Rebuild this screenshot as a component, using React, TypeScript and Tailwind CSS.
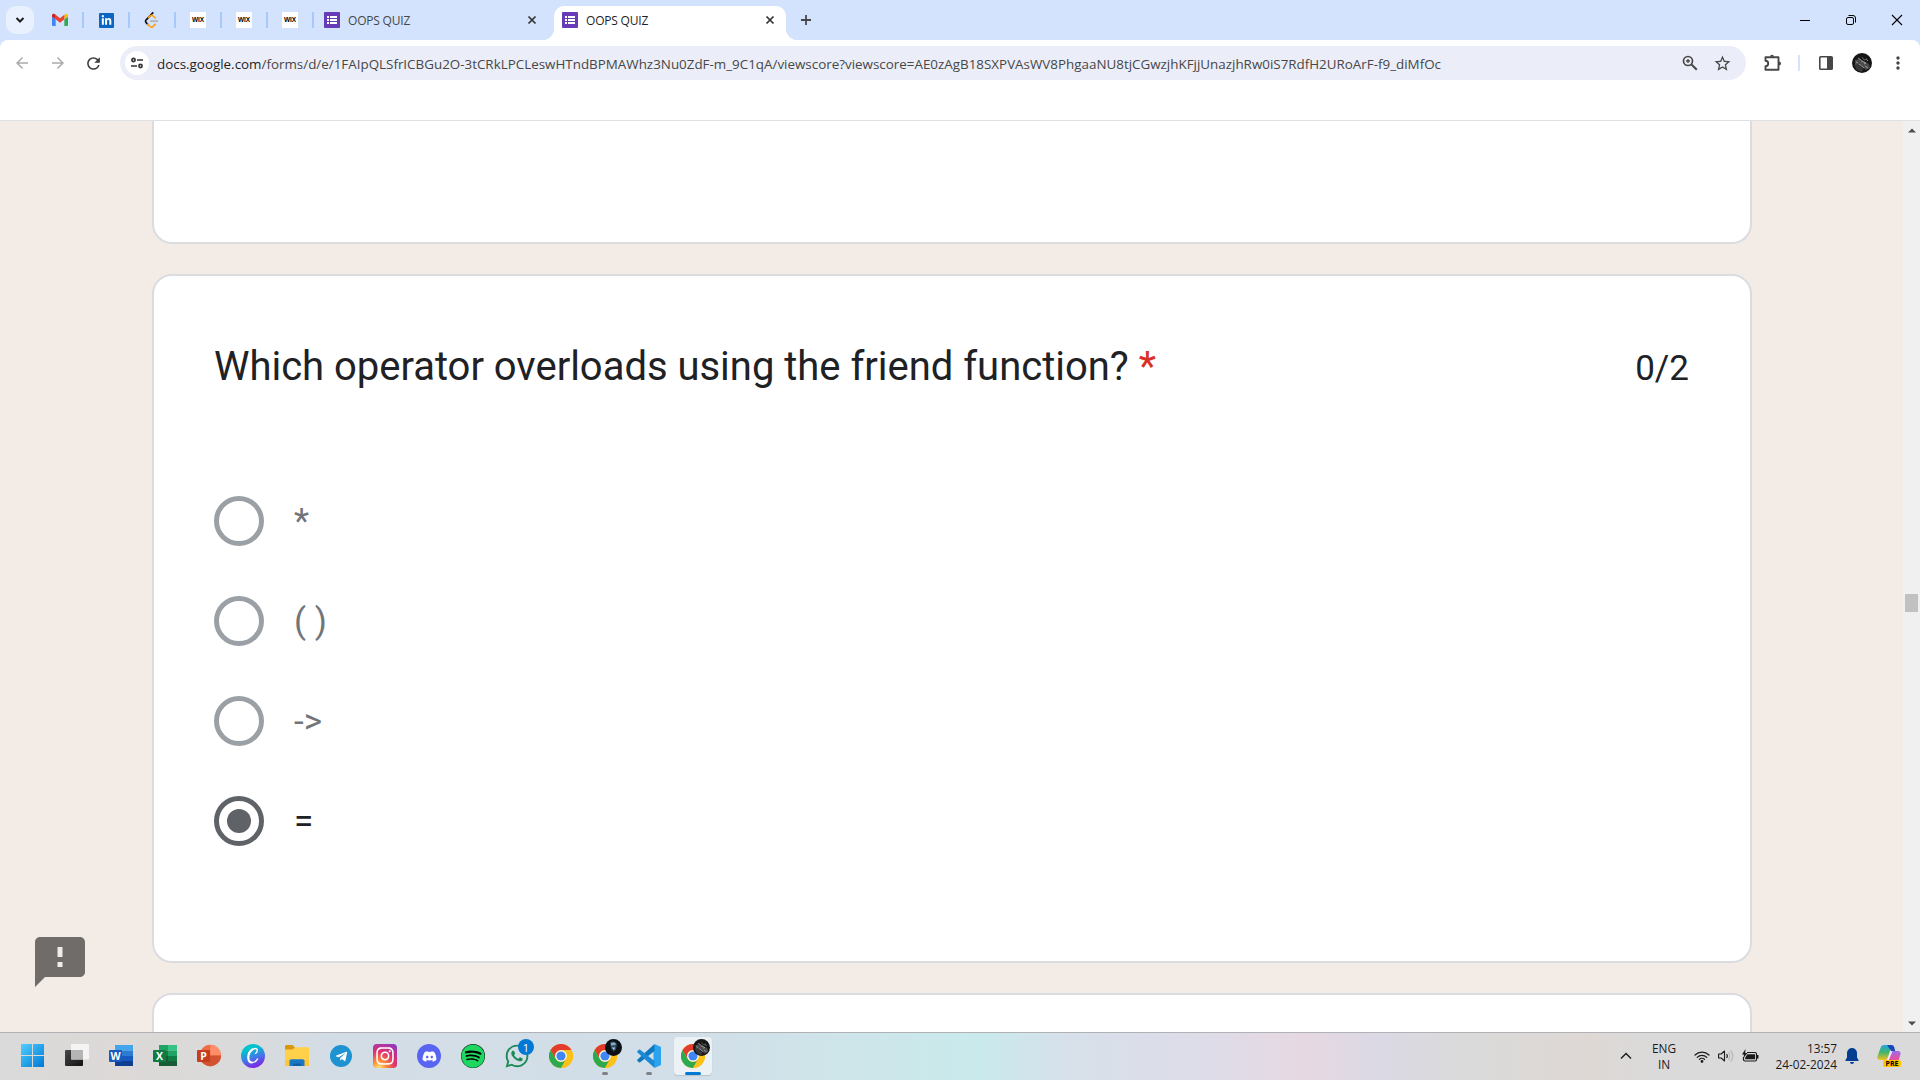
import React from "react";
import {
  FaDiscord,
  FaInstagram,
  FaLinkedinIn,
  FaSpotify,
  FaTelegramPlane,
  FaWhatsapp,
} from "react-icons/fa";
import {
  MdArrowBack,
  MdArrowForward,
  MdFeedback,
  MdMoreVert,
  MdRefresh,
  MdStarBorder,
} from "react-icons/md";

/* ---------- Tab strip ---------- */

function GmailIcon() {
  return (
    <svg width="16" height="16" viewBox="0 0 24 24">
      <path d="M1.500 21h4V11L0 7v12.500A1.500 1.500 0 0 0 1.500 21z" fill="#4285f4" />
      <path d="M18.500 21h4A1.500 1.500 0 0 0 24 19.500V7l-5.500 4z" fill="#34a853" />
      <path d="M18.500 4.500V11L24 7V5.200c0-2.200-2.500-3.400-4.200-2z" fill="#fbbc04" />
      <path d="M5.500 11V4.300L12 9.200l6.500-4.900V11L12 16z" fill="#ea4335" />
      <path d="M0 5.200V7l5.500 4V4.300L4.200 3.200C2.500 1.900 0 3 0 5.200z" fill="#c5221f" />
    </svg>
  );
}

function LeetIcon() {
  return (
    <svg width="16" height="16" viewBox="0 0 16 16" fill="none" strokeLinecap="round" strokeWidth="1.700">
      <path d="M8.800.9 2.200 7.800c-.8.900-.8 2 0 2.900l1.500 1.600" stroke="#111" />
      <path d="M3.700 12.300 5.900 14.400c1 .9 2.400.9 3.300 0l2-2M4.600 5.300l1.600-1.400c1-.8 2.200-.7 3 .1l2 1.900" stroke="#ffa116" />
      <path d="M6.800 9.200h6.500" stroke="#b3b3b3" />
    </svg>
  );
}

function WixIcon() {
  return (
    <span className="flex h-4 w-4 items-center justify-center bg-white font-['Liberation_Sans',sans-serif] text-[6.500px] leading-none font-bold tracking-[-0.100px] text-black">
      WIX
    </span>
  );
}

function FormsIcon() {
  return (
    <svg width="16" height="16" viewBox="0 0 16 16" className="shrink-0">
      <rect width="16" height="16" rx="1" fill="#673ab7" />
      <path d="M3 4h2v2H3zM3 7h2v2H3zM3 10h2v2H3zM6 4h7v2H6zM6 7h7v2H6zM6 10h7v2H6z" fill="#fff" />
    </svg>
  );
}

function TabStrip() {
  const pinned = [
    <GmailIcon />,
    <span className="flex h-[15px] w-[15px] items-center justify-center rounded-[1px] bg-[#0a66c2]">
      <FaLinkedinIn size={11} color="#fff" />
    </span>,
    <LeetIcon />,
    <WixIcon />,
    <WixIcon />,
    <WixIcon />,
  ];
  return (
    <div className="flex h-10 shrink-0 items-center bg-[#d3e3fd] pl-1.5 font-['Open_Sans',sans-serif] text-[12px] tracking-[-0.200px]">
      <div className="mr-1 flex h-7 w-7 items-center justify-center rounded-[10px] bg-[#eaf1fe]">
        <svg width="10" height="8" viewBox="0 0 10 8" fill="none" stroke="#1f1f1f" strokeWidth="2">
          <path d="M1.500 2 5 5.500 8.500 2" />
        </svg>
      </div>
      {pinned.map((icon, i) => (
        <div key={i} className="flex h-4 w-[46px] items-center justify-center border-r-2 border-[#a8c7fa]">
          {icon}
        </div>
      ))}
      <div className="flex h-full w-[240px] items-center pr-[14px] pl-[10px] text-[#474747]">
        <FormsIcon />
        <span className="ml-2 pt-0.5 whitespace-nowrap">OOPS QUIZ</span>
        <CloseX />
      </div>
      <div className="relative flex h-[34px] w-[232px] items-center self-end rounded-t-[10px] bg-white pr-2 pb-[6px] pl-2 text-[#1f1f1f]">
        <span className="absolute bottom-0 -left-3 h-3 w-3 bg-[radial-gradient(circle_at_0_0,transparent_12px,white_12.500px)]" />
        <span className="absolute -right-3 bottom-0 h-3 w-3 bg-[radial-gradient(circle_at_100%_0,transparent_12px,white_12.500px)]" />
        <FormsIcon />
        <span className="ml-2 pt-0.5 whitespace-nowrap">OOPS QUIZ</span>
        <CloseX />
      </div>
      <svg className="ml-[14px]" width="12" height="12" viewBox="0 0 12 12" stroke="#474747" strokeWidth="1.800">
        <path d="M6 1v10M1 6h10" />
      </svg>
      <div className="ml-auto flex items-center">
        <svg width="46" height="20" viewBox="0 0 46 20" stroke="#000" fill="none">
          <path d="M18 10.500h10" />
        </svg>
        <svg width="46" height="20" viewBox="0 0 46 20" stroke="#000" fill="none">
          <rect x="18.500" y="7.500" width="7" height="7" rx="1.500" />
          <path d="M20.500 5.500H25a2.500 2.500 0 0 1 2.500 2.500v4.500" />
        </svg>
        <svg width="46" height="20" viewBox="0 0 46 20" stroke="#000" fill="none" strokeWidth="1.100">
          <path d="m18 5 10 10M28 5 18 15" />
        </svg>
      </div>
    </div>
  );
}

function CloseX() {
  return (
    <svg className="ml-auto" width="16" height="16" viewBox="0 0 16 16" stroke="#333" strokeWidth="1.700">
      <path d="m4.500 4.500 7 7M11.500 4.500l-7 7" />
    </svg>
  );
}

/* ---------- Toolbar ---------- */

function Toolbar() {
  return (
    <div className="h-[81px] shrink-0 bg-[#d3e3fd]">
      <div className="h-full rounded-t-lg border-b border-[#dfe1e4] bg-white pt-[6px]">
        <div className="flex h-[34px] items-center">
          <MdArrowBack size={18} color="#a9abae" className="ml-[13px] shrink-0" />
          <MdArrowForward size={18} color="#a9abae" className="ml-[18px] shrink-0" />
          <MdRefresh size={19} color="#3c3c3c" className="ml-[17px] shrink-0" />
          <div className="ml-[17px] flex h-[34px] w-[1626px] shrink-0 items-center rounded-full bg-[#ebeef8] pl-[5px]">
            <div className="flex h-6 w-6 items-center justify-center rounded-full bg-white">
              <svg width="12" height="12" viewBox="0 0 12 12" fill="none" stroke="#333" strokeWidth="1.700">
                <circle cx="2.500" cy="3" r="1.600" />
                <path d="M6 3h6M0 9h6" />
                <circle cx="9.500" cy="9" r="1.600" />
              </svg>
            </div>
            <span className="ml-2 pt-0.5 font-['Open_Sans',sans-serif] text-[13.400px] leading-5 whitespace-nowrap text-[#474747]">
              <span className="text-[#1f1f1f]">docs.google.com</span>
              /forms/d/e/1FAIpQLSfrICBGu2O-3tCRkLPCLeswHTndBPMAWhz3Nu0ZdF-m_9C1qA/viewscore?viewscore=AE0zAgB18SXPVAsWV8PhgaaNU8tjCGwzjhKFjjUnazjhRw0iS7RdfH2URoArF-f9_diMfOc
            </span>
            <svg className="mr-[15px] ml-auto" width="16" height="16" viewBox="0 0 16 16" fill="none" stroke="#474747" strokeWidth="1.700">
              <circle cx="6" cy="6" r="4.500" />
              <path d="m9.500 9.500 5.300 5.300" strokeWidth="2" />
              <path d="M4 6h4M6 4v4" strokeWidth="1.300" />
            </svg>
            <MdStarBorder size={19} color="#474747" className="mr-[14px]" />
          </div>
          <svg className="ml-[17px] shrink-0" width="20" height="20" viewBox="0 0 20 20">
            <path
              d="M2.500 4.200h13v12.600h-13v-3.600a2.700 2.700 0 0 0 0-5.400z"
              fill="none"
              stroke="#474747"
              strokeWidth="1.900"
              strokeLinejoin="round"
            />
            <path d="M7 3.800a2 2 0 0 1 4 0zM16 8.500a2 2 0 0 1 0 4z" fill="#474747" />
          </svg>
          <span className="ml-[15px] h-4 w-0.5 shrink-0 bg-[#d3e3fd]" />
          <svg className="ml-[18px] shrink-0" width="16" height="16" viewBox="0 0 16 16">
            <rect x="1.800" y="1.800" width="12.400" height="12.400" rx="0.800" fill="none" stroke="#474747" strokeWidth="1.600" />
            <path d="M9 2h5v12H9z" fill="#474747" />
          </svg>
          <Avatar className="ml-[18px] h-5 w-5 shrink-0" />
          <MdMoreVert size={20} color="#474747" className="ml-4 shrink-0" />
        </div>
      </div>
    </div>
  );
}

function Avatar({ className }: { className: string }) {
  return (
    <svg className={className} viewBox="0 0 20 20">
      <circle cx="10" cy="10" r="10" fill="#161616" />
      <path d="M3 7l5-1 9 5 1 4-4 2-6-5-5 1z" fill="#4a4a4a" />
      <path d="M2 12l4-1 5 5-1 3-5-2z" fill="#383838" />
      <path d="M6 5l3 2M9 8l5 2-2 1M7 11l5 4M13 13l3 2M4 9l2 1M14 6l2 2" stroke="#a5a5a5" strokeWidth="0.900" fill="none" />
      <path d="M10 4l2 3 3-1" stroke="#707070" strokeWidth="0.800" fill="none" />
    </svg>
  );
}

/* ---------- Form ---------- */

const options = [
  { label: "*", selected: false },
  { label: "( )", selected: false },
  { label: "->", selected: false },
  { label: "=", selected: true },
];

function Radio({ selected }: { selected: boolean }) {
  return selected ? (
    <span className="flex h-[50px] w-[50px] items-center justify-center rounded-full border-[5px] border-[#5f6368]">
      <span className="h-6 w-6 rounded-full bg-[#5f6368]" />
    </span>
  ) : (
    <span className="h-[50px] w-[50px] rounded-full border-[5px] border-[#9aa0a6]" />
  );
}

function FormPage() {
  return (
    <div className="relative flex h-[911px] shrink-0 overflow-hidden bg-[#f3ebe6]">
      <div className="ml-[152px] flex w-[1600px] flex-col gap-[30px] font-['Roboto',sans-serif]">
        <div className="h-[123px] shrink-0 rounded-b-[20px] border-2 border-t-0 border-[#dadce0] bg-white" />
        <div className="h-[689px] shrink-0 rounded-[20px] border-2 border-[#dadce0] bg-white px-[60px] pt-[61px]">
          <div className="flex h-[60px] items-baseline justify-between text-[40px] leading-[60px] text-[#202124]">
            <h1 className="tracking-[-0.020px] whitespace-nowrap">
              Which operator overloads using the friend function?
              <span className="ml-[10px] text-[#d93025]">*</span>
            </h1>
            <span className="mr-px text-[35px]">0/2</span>
          </div>
          <div className="mt-[74px] flex flex-col">
            {options.map((o) => (
              <div key={o.label} className="flex h-[100px] items-center">
                <Radio selected={o.selected} />
                <span
                  className={
                    o.selected
                      ? "ml-[30px] pt-0.5 text-[35px] leading-[50px] text-[#202124]"
                      : "ml-[30px] pt-0.5 text-[35px] leading-[50px] text-[#70757a]"
                  }
                >
                  {o.label}
                </span>
              </div>
            ))}
          </div>
        </div>
        <div className="h-[100px] shrink-0 rounded-[20px] border-2 border-[#dadce0] bg-white" />
      </div>
      <MdFeedback size={60} color="#706c69" className="absolute top-[811px] left-[30px]" />
      <div className="ml-auto flex w-[17px] flex-col items-center bg-[#f0f0f0]">
        <svg className="mt-[7px]" width="8" height="5" viewBox="0 0 8 5">
          <path d="M0 4.500h8L4 .5z" fill="#4d4d4d" />
        </svg>
        <span className="mt-[461px] h-[18px] w-[13px] bg-[#c1c1c1]" />
        <svg className="mt-auto mb-[6px]" width="8" height="5" viewBox="0 0 8 5">
          <path d="M0 .5h8L4 4.500z" fill="#4d4d4d" />
        </svg>
      </div>
    </div>
  );
}

/* ---------- Taskbar ---------- */

function WindowsIcon() {
  return (
    <svg width="24" height="24" viewBox="0 0 24 24">
      <defs>
        <linearGradient id="win" x1="0" y1="0" x2="1" y2="1">
          <stop offset="0" stopColor="#4fd0ff" />
          <stop offset="1" stopColor="#0078d4" />
        </linearGradient>
      </defs>
      <path d="M0 0h11v11H0zM12 0h11v11H12zM0 12h11v11H0zM12 12h11v11H12z" fill="url(#win)" />
    </svg>
  );
}

function TaskViewIcon() {
  return (
    <svg width="24" height="24" viewBox="0 0 24 24">
      <defs>
        <linearGradient id="tvDark" x1="0" y1="0" x2="1" y2="1">
          <stop offset="0" stopColor="#484848" />
          <stop offset="1" stopColor="#111" />
        </linearGradient>
      </defs>
      <rect x="0" y="6" width="18" height="16" rx="1" fill="url(#tvDark)" />
      <rect x="6" y="0" width="18" height="15.500" rx="1" fill="#f4f4f4" />
      <rect x="6" y="6" width="12" height="9.500" fill="#b4b4b4" />
    </svg>
  );
}

function OfficeIcon({ letter, colors }: { letter: string; colors: string[] }) {
  return (
    <span className="relative block h-6 w-6">
      <svg width="24" height="24" viewBox="0 0 24 24">
        <path d="M6 1h9v5.500H6z" fill={colors[0]} />
        <path d="M15 1h9v5.500h-9z" fill={colors[1]} />
        <path d="M6 6.500h9V12H6z" fill={colors[2]} />
        <path d="M15 6.500h9V12h-9z" fill={colors[3]} />
        <path d="M6 12h9v5H6z" fill={colors[4]} />
        <path d="M15 12h9v5h-9z" fill={colors[5]} />
        <path d="M6 17h18v5H6z" fill={colors[6]} />
        <rect x="0" y="6" width="13" height="12" rx="1" fill={colors[7]} />
      </svg>
      <OfficeLetter letter={letter} />
    </span>
  );
}

function OfficeLetter({ letter }: { letter: string }) {
  return (
    <span className="absolute top-[6px] left-0 w-[13px] text-center font-['Open_Sans',sans-serif] text-[10.500px] leading-3 font-bold text-white">
      {letter}
    </span>
  );
}

function PowerPointIcon() {
  return (
    <span className="relative block h-6 w-6">
      <svg width="24" height="24" viewBox="0 0 24 24">
        <circle cx="13.300" cy="11.500" r="10.700" fill="#ed6c47" />
        <path d="M13.300.8A10.700 10.700 0 0 1 24 11.500H13.300z" fill="#ff8f6b" />
        <path d="M2.600 11.500H24a10.700 10.700 0 0 1-21.400 0z" fill="#d35230" />
        <rect x="0" y="6" width="13" height="12" rx="1" fill="#c43e1c" />
      </svg>
      <OfficeLetter letter="P" />
    </span>
  );
}

function CanvaIcon() {
  return (
    <span className="flex h-6 w-6 items-center justify-center rounded-full bg-[linear-gradient(160deg,#00c4cc_25%,#3f7be8_55%,#7d2ae8_85%)]">
      <svg width="24" height="24" viewBox="0 0 24 24" fill="none" stroke="#fff" strokeLinecap="round">
        <path d="M14.500 9.500c2.400-1.600 2.300-5-.3-5-3.500 0-6.900 4.500-6.900 9" strokeWidth="1.300" />
        <path d="M11 5.700c-2.200 1.700-3.700 4.700-3.700 7.800 0 3 1.400 5 3.700 5" strokeWidth="2.200" />
        <path d="M11 18.500c2.500 0 4.500-1.600 5.600-3.600" strokeWidth="1.200" />
      </svg>
    </span>
  );
}

function FolderIcon() {
  return (
    <svg width="24" height="24" viewBox="0 0 24 24">
      <path d="M0 2.500C0 1.700.6 1 1.500 1h6l2.500 2.500L8 6H0z" fill="#d9980c" />
      <path d="M0 5.500h8l2-2.300h14V22H0z" fill="#ffd04a" />
      <path d="M0 16h24v6H0z" fill="#fcc636" />
      <path d="M4.500 22v-5c0-1 .8-1.800 1.800-1.800h11.400c1 0 1.800.8 1.800 1.800v5z" fill="#1976c5" />
      <path d="M8 22v-2.500h8V22z" fill="#0f5ea8" />
    </svg>
  );
}

function ChromeIcon() {
  return (
    <svg width="24" height="24" viewBox="0 0 24 24">
      <circle cx="12" cy="12" r="12" fill="#fbc116" />
      <path d="M1.600 6A12 12 0 0 1 22.400 6H12a6 6 0 0 0-5.200 9z" fill="#e33b2e" />
      <path d="M1.600 6 6.800 15a6 6 0 0 0 10.400 0L12 24A12 12 0 0 1 1.600 6z" fill="#2da94f" />
      <path d="M17.200 15 12 24A12 12 0 0 0 22.400 6H12a6 6 0 0 1 5.200 9z" fill="#fbc116" />
      <circle cx="12" cy="12" r="5.800" fill="#fff" />
      <circle cx="12" cy="12" r="4.600" fill="#4285f4" />
    </svg>
  );
}

function VsCodeIcon() {
  return (
    <svg width="24" height="24" viewBox="0 0 24 24">
      <path d="M17.500 0 24 3v18l-6.500 3-1-6V6z" fill="#2ba3ee" />
      <path d="M17.500 0v7L3.200 18.200c-.4.300-.9.300-1.300 0L.5 16.900c-.5-.4-.5-1.100 0-1.500z" fill="#0f78bf" />
      <path d="M17.500 24v-7L3.200 5.800c-.4-.3-.9-.3-1.300 0L.5 7.100c-.5.400-.5 1.100 0 1.500z" fill="#1a8ad6" />
    </svg>
  );
}

function TaskButton({ children, state }: { children: React.ReactNode; state?: "open" | "active" }) {
  return (
    <div className="relative flex h-[46px] w-11 items-center justify-center">
      {state === "active" && (
        <span className="absolute top-1 left-[3px] h-[38px] w-[38px] rounded-[4px] bg-[#ecf1f5] shadow-[0_1px_1px_rgba(0,0,0,0.120)]" />
      )}
      <span className="relative">{children}</span>
      {state === "open" && <span className="absolute top-[39px] left-[19px] h-[3px] w-[6px] rounded-full bg-[#7d8287]" />}
      {state === "active" && <span className="absolute top-[39px] left-[14px] h-[3px] w-4 rounded-full bg-[#0078d4]" />}
    </div>
  );
}

function Taskbar() {
  return (
    <div className="flex h-12 shrink-0 items-center border-t border-[#b0b2b5] bg-[linear-gradient(90deg,#dadada_0px,#dcd9d7_120px,#dadada_230px,#d3dde6_330px,#d2dfe8_700px,#cde6ea_870px,#c9eaec_980px,#d7e0ea_1070px,#dddce8_1200px,#e6d8e2_1305px,#dad9e5_1380px,#dadada_1460px,#ded8d5_1590px,#dadada_1650px)] pb-px pl-[11px] font-['Open_Sans',sans-serif]">
      <TaskButton><WindowsIcon /></TaskButton>
      <TaskButton><TaskViewIcon /></TaskButton>
      <TaskButton>
        <OfficeIcon letter="W" colors={["#41a5ee", "#41a5ee", "#2b7cd3", "#2b7cd3", "#185abd", "#185abd", "#103f91", "#185abd"]} />
      </TaskButton>
      <TaskButton>
        <OfficeIcon letter="X" colors={["#21a366", "#33c481", "#107c41", "#21a366", "#185c37", "#107c41", "#185c37", "#107c41"]} />
      </TaskButton>
      <TaskButton><PowerPointIcon /></TaskButton>
      <TaskButton><CanvaIcon /></TaskButton>
      <TaskButton><FolderIcon /></TaskButton>
      <TaskButton>
        <span className="flex h-[22px] w-[22px] items-center justify-center rounded-full bg-[#1f93d2]">
          <FaTelegramPlane size={13} color="#fff" />
        </span>
      </TaskButton>
      <TaskButton>
        <span className="flex h-6 w-6 items-center justify-center rounded-[4px] bg-[radial-gradient(circle_at_25%_100%,#ffd56b_5%,#fa8a3c_25%,#e1306c_55%,#8a3ac8_95%)]">
          <FaInstagram size={20} color="#fff" />
        </span>
      </TaskButton>
      <TaskButton>
        <span className="flex h-6 w-6 items-center justify-center rounded-full bg-[#5865f2]">
          <FaDiscord size={15} color="#fff" />
        </span>
      </TaskButton>
      <TaskButton>
        <span className="block rounded-full bg-black">
          <FaSpotify size={24} color="#1ed760" />
        </span>
      </TaskButton>
      <TaskButton>
        <FaWhatsapp size={26} color="#1f8a56" />
        <span className="absolute -top-[4px] left-[14px] flex h-4 w-4 items-center justify-center rounded-full bg-[#0078d4] text-[11px] leading-none text-white">
          1
        </span>
      </TaskButton>
      <TaskButton><ChromeIcon /></TaskButton>
      <TaskButton state="open">
        <ChromeIcon />
        <svg className="absolute -top-[5px] left-3 h-[17px] w-[17px]" viewBox="0 0 20 20">
          <circle cx="10" cy="10" r="10" fill="#0d1116" />
          <path d="M6 4c2-2 7-1 8 2l-1 6-3 3-3-4z" fill="#2d4d63" />
          <path d="M7 5c2-1.500 5-1.500 6 1l-1 1-5 .5z" fill="#86a9bd" />
          <path d="M8 10h4l-1.500 3z" fill="#b9ced8" />
        </svg>
      </TaskButton>
      <TaskButton state="open"><VsCodeIcon /></TaskButton>
      <TaskButton state="active">
        <ChromeIcon />
        <Avatar className="absolute -top-[5px] left-3 h-[17px] w-[17px]" />
      </TaskButton>

      <div className="ml-auto flex h-full items-center text-[11.800px] leading-4 text-[#1a1a1a]">
        <svg width="12" height="8" viewBox="0 0 12 8" fill="none" stroke="#1a1a1a" strokeWidth="1.400">
          <path d="m1 6.500 5-5 5 5" />
        </svg>
        <div className="ml-[20px] w-[24px] text-center">
          ENG
          <br />
          IN
        </div>
        <svg className="ml-[18px]" width="16" height="13" viewBox="0 0 16 13" fill="none" stroke="#1a1a1a" strokeWidth="1.200" strokeLinecap="round">
          <path d="M1 5a10 10 0 0 1 14 0M3.200 7.300a6.800 6.800 0 0 1 9.600 0M5.400 9.400a3.700 3.700 0 0 1 5.200 0" />
          <circle cx="8" cy="11.400" r="0.800" fill="#1a1a1a" />
        </svg>
        <svg className="ml-[8px]" width="16" height="14" viewBox="0 0 16 14" fill="none" stroke="#1a1a1a" strokeWidth="1.100">
          <path d="M.6 5v4h2.600L6.500 12V2L3.200 5z" strokeLinejoin="round" />
          <path d="M8.500 5a3 3 0 0 1 0 4" />
          <path d="M10.300 3.200a5.500 5.500 0 0 1 0 7.600M12.600 1.500a8 8 0 0 1 0 11" stroke="#b5b5b5" />
        </svg>
        <svg className="ml-[8px]" width="17" height="14" viewBox="0 0 17 14">
          <path d="M5 3.500h8a1.500 1.500 0 0 1 1.500 1.500v5.500A1.500 1.500 0 0 1 13 12H3a1.500 1.500 0 0 1-1.500-1.500V8" fill="none" stroke="#1a1a1a" strokeWidth="1.200" />
          <path d="M5.500 5.300H13V10.300H3.200V8.500zM15 6h1.500v3.500H15zM3.500 0 0 5.500h2L1.500 9l4-5H3.200z" fill="#1a1a1a" />
        </svg>
        <div className="ml-[14px] w-[64px] text-right whitespace-nowrap">
          13:57
          <br />
          24-02-2024
        </div>
        <svg className="ml-[8px]" width="14" height="16" viewBox="0 0 14 16" fill="#003e92">
          <path d="M7 0a5 5 0 0 0-5 5v4.500L.4 12.300c-.2.400 0 .7.400.7h12.400c.4 0 .6-.3.400-.7L12 9.500V5a5 5 0 0 0-5-5zM5 14h4a2 2 0 0 1-4 0z" />
        </svg>
        <div className="relative mr-[19px] ml-[18px] h-6 w-6">
          <svg width="24" height="24" viewBox="0 0 24 24">
            <defs>
              <linearGradient id="cpA" x1="0" y1="0" x2="0" y2="1">
                <stop offset="0" stopColor="#1fa8e0" />
                <stop offset="0.500" stopColor="#45b56a" />
                <stop offset="1" stopColor="#f4c021" />
              </linearGradient>
              <linearGradient id="cpB" x1="0" y1="0" x2="0" y2="1">
                <stop offset="0" stopColor="#9b6cf0" />
                <stop offset="0.600" stopColor="#ea4f9a" />
                <stop offset="1" stopColor="#f79a4c" />
              </linearGradient>
            </defs>
            <path d="M7 1h8L10.500 14c-.5 1.500-1 2-2.500 2H3c-2 0-3.200-1.500-2.600-3.500L3.500 4C4.200 2 5.200 1 7 1z" fill="url(#cpA)" />
            <path d="M10 1h4.500c1.500 0 2.300.8 2.800 2.500l.9 3.500h-4z" fill="#1947b8" />
            <path d="M16.500 7H21c2 0 3 1.500 2.400 3.500L21 18.500c-.5 2-1.800 2.500-4 2.500H9l3.500-10c.8-2.600 2-4 4-4z" fill="url(#cpB)" />
            <path d="M14.500 7.500 11 16" stroke="#f4eef6" strokeWidth="1.600" />
          </svg>
          <span className="absolute top-[16px] left-[6px] flex h-[7px] w-[18px] items-center justify-center rounded-[2px] bg-[#ffc400] text-[7px] leading-none font-bold text-black">
            PRE
          </span>
        </div>
      </div>
    </div>
  );
}

export default function App() {
  return (
    <div className="flex h-[1080px] w-[1920px] flex-col overflow-hidden">
      <TabStrip />
      <Toolbar />
      <FormPage />
      <Taskbar />
    </div>
  );
}
